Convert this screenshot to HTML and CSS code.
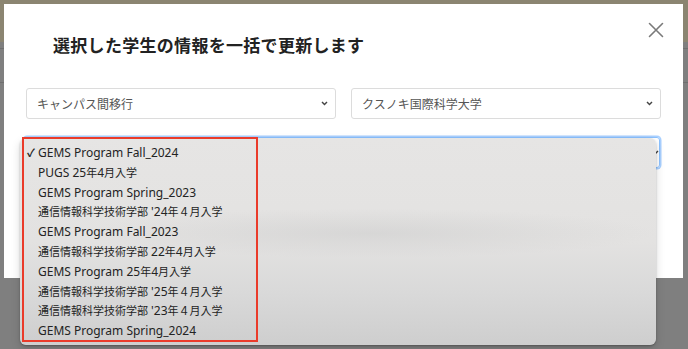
FILE: index.html
```html
<!DOCTYPE html>
<html lang="ja">
<head>
<meta charset="utf-8">
<title>一括更新</title>
<link rel="stylesheet" href="styles.css">
</head>
<body>
<div class="page">
  <div class="page-header"></div>
  <div class="page-body">
    <div class="page-line"></div>
    <div class="page-line"></div>
  </div>
</div>

<div class="modal">
  <div class="modal-head">
    <h2 class="modal-title">選択した学生の情報を一括で更新します</h2>
    <button class="close" type="button" aria-label="閉じる">
      <svg width="16" height="16" viewBox="0 0 16 16"><path d="M1.5 1.5 L14.5 14.5 M14.5 1.5 L1.5 14.5" stroke="#7a7a7a" stroke-width="1.6" fill="none" stroke-linecap="round"/></svg>
    </button>
  </div>
  <div class="modal-body">
    <div class="select-row">
      <div class="select">
        <span>キャンパス間移行</span>
        <svg class="chev" width="7" height="5" viewBox="0 0 7 5"><path d="M1 1 L3.5 3.6 L6 1" stroke="#444" stroke-width="1.4" fill="none"/></svg>
      </div>
      <div class="select">
        <span>クスノキ国際科学大学</span>
        <svg class="chev" width="7" height="5" viewBox="0 0 7 5"><path d="M1 1 L3.5 3.6 L6 1" stroke="#444" stroke-width="1.4" fill="none"/></svg>
      </div>
    </div>
    <div class="select focused">
      <span></span>
      <svg class="chev" width="7" height="5" viewBox="0 0 7 5"><path d="M1 1 L3.5 3.6 L6 1" stroke="#444" stroke-width="1.4" fill="none"/></svg>
    </div>
  </div>
</div>

<ul class="popup">
  <li class="item"><span class="tick">✓</span>GEMS Program Fall_2024</li>
  <li class="item"><span class="tick"></span>PUGS 25<span class="ja">年</span>4<span class="ja">月入学</span></li>
  <li class="item"><span class="tick"></span>GEMS Program Spring_2023</li>
  <li class="item"><span class="tick"></span><span class="ja">通信情報科学技術学部</span>&nbsp;'24<span class="ja">年４月入学</span></li>
  <li class="item"><span class="tick"></span>GEMS Program Fall_2023</li>
  <li class="item"><span class="tick"></span><span class="ja">通信情報科学技術学部</span>&nbsp;22<span class="ja">年</span>4<span class="ja">月入学</span></li>
  <li class="item"><span class="tick"></span>GEMS Program 25<span class="ja">年</span>4<span class="ja">月入学</span></li>
  <li class="item"><span class="tick"></span><span class="ja">通信情報科学技術学部</span>&nbsp;'25<span class="ja">年４月入学</span></li>
  <li class="item"><span class="tick"></span><span class="ja">通信情報科学技術学部</span>&nbsp;'23<span class="ja">年４月入学</span></li>
  <li class="item"><span class="tick"></span>GEMS Program Spring_2024</li>
</ul>

<div class="highlight"></div>
</body>
</html>
```

FILE: styles.css
```css
* { box-sizing: border-box; }

html, body {
  margin: 0;
  padding: 0;
  width: 688px;
  height: 349px;
  overflow: hidden;
}

body {
  background: #7f7f7f;
  font-family: "Noto Sans", "Noto Sans CJK JP", sans-serif;
  position: relative;
}

.page-header {
  height: 42px;
  background: #8b8571;
}

.page-body {
  padding-top: 6px;
}

.page-line {
  height: 1px;
  background: #6f6f6f;
  margin-bottom: 33px;
}

.modal {
  position: absolute;
  left: 4px;
  top: 4px;
  width: 679px;
  height: 274px;
  background: #ffffff;
}

.modal-head {
  display: flex;
  justify-content: space-between;
  align-items: flex-start;
  padding: 29px 19px 0 49px;
}

.modal-title {
  margin: 0;
  font-family: "Noto Sans CJK JP", sans-serif;
  font-weight: 700;
  font-size: 17px;
  line-height: 24px;
  letter-spacing: 0.3px;
  color: #222;
}

.close {
  border: 0;
  background: none;
  padding: 0;
  margin-top: -11px;
  width: 16px;
  height: 16px;
  display: flex;
}

.modal-body {
  padding: 31px 22px 0 22px;
  display: flex;
  flex-direction: column;
  gap: 18px;
}

.select-row {
  display: grid;
  grid-template-columns: 1fr 1fr;
  gap: 15px;
}

.select {
  height: 31px;
  border: 1px solid #dcdcdc;
  border-radius: 3px;
  display: flex;
  align-items: center;
  justify-content: space-between;
  padding: 0 7px 0 10px;
  font-family: "Noto Sans CJK JP", sans-serif;
  font-size: 12px;
  color: #555;
}

.select.focused {
  margin: 0 1px 0 -2px;
  padding-right: 0;
  border: 1px solid #8cc2ff;
  box-shadow: 0 0 0 1.5px #a9d0ff;
}

.chev { display: block; }

.popup {
  position: absolute;
  left: 20px;
  top: 138px;
  width: 636px;
  height: 207px;
  margin: 0;
  padding: 5px 0 0 0;
  list-style: none;
  border-radius: 6px;
  background:
    radial-gradient(ellipse 45% 12% at 55% 46%, rgba(205,205,205,0.55), rgba(205,205,205,0) 100%),
    linear-gradient(#e6e5e4 0%, #e3e2e1 50%, #d9d9d9 75%, #cecece 100%);
  box-shadow: 0 1px 2px rgba(0,0,0,0.25), 0 4px 10px rgba(0,0,0,0.15);
}

.item {
  height: 19.8px;
  line-height: 19.8px;
  font-size: 12px;
  color: #232323;
  display: flex;
  align-items: center;
  white-space: pre;
}

.ja {
  font-family: "Noto Sans CJK JP", sans-serif;
  font-size: 11px;
}

.tick {
  display: inline-block;
  width: 18px;
  padding-left: 7px;
  font-size: 11px;
  font-weight: 700;
}

.highlight {
  position: absolute;
  left: 22px;
  top: 137px;
  width: 236px;
  height: 205px;
  border: 2px solid #ea3b2a;
}
```
